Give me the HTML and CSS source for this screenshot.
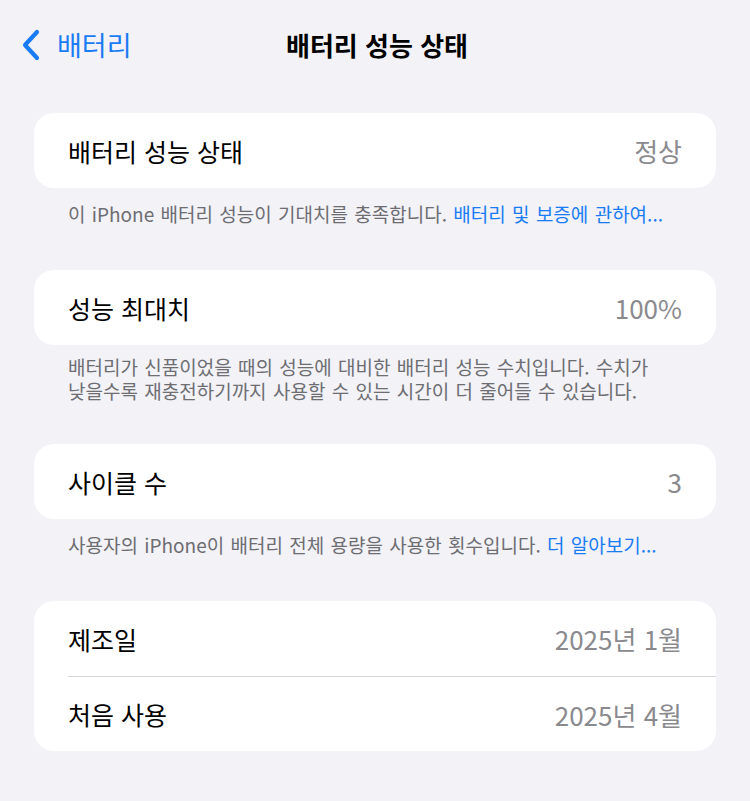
FILE: index.html
```html
<!DOCTYPE html>
<html lang="ko">
<head>
<meta charset="utf-8">
<link rel="stylesheet" href="styles.css">
</head>
<body>
<div class="nav">
  <div class="back">
    <svg class="chev" width="20" height="32" viewBox="0 0 20 32"><path d="M16 3 L4 16 L16 29" fill="none" stroke="#1a7cf5" stroke-width="4.2" stroke-linecap="round" stroke-linejoin="round"/></svg>
    <span class="back-label">배터리</span>
  </div>
  <div class="title">배터리 성능 상태</div>
</div>
<div class="content">
  <div class="section">
    <div class="card">
      <div class="row"><span class="label">배터리 성능 상태</span><span class="value">정상</span></div>
    </div>
    <div class="foot">이 iPhone 배터리 성능이 기대치를 충족합니다. <span class="link">배터리 및 보증에 관하여...</span></div>
  </div>
  <div class="section">
    <div class="card">
      <div class="row"><span class="label">성능 최대치</span><span class="value">100%</span></div>
    </div>
    <div class="foot foot-two">배터리가 신품이었을 때의 성능에 대비한 배터리 성능 수치입니다. 수치가<br>낮을수록 재충전하기까지 사용할 수 있는 시간이 더 줄어들 수 있습니다.</div>
  </div>
  <div class="section">
    <div class="card">
      <div class="row"><span class="label">사이클 수</span><span class="value">3</span></div>
    </div>
    <div class="foot">사용자의 iPhone이 배터리 전체 용량을 사용한 횟수입니다. <span class="link">더 알아보기...</span></div>
  </div>
  <div class="section">
    <div class="card">
      <div class="row"><span class="label">제조일</span><span class="value">2025년 1월</span></div>
      <div class="sep"></div>
      <div class="row row-last"><span class="label">처음 사용</span><span class="value">2025년 4월</span></div>
    </div>
  </div>
</div>
</body>
</html>
```
FILE: styles.css
```css
* { box-sizing: border-box; }
html, body {
  margin: 0;
  padding: 0;
  background: #f2f2f7;
}
body {
  width: 750px;
  height: 801px;
  overflow: hidden;
  font-family: "Noto Sans CJK KR", "Noto Sans", sans-serif;
  color: #000;
}
.nav {
  position: relative;
  height: 90px;
  display: flex;
  align-items: center;
  justify-content: center;
}
.back {
  position: absolute;
  left: 21px;
  top: 29px;
  display: flex;
  align-items: center;
  gap: 16px;
  color: #1a7cf5;
}
.chev { display: block; }
.back-label {
  font-size: 27px;
  line-height: 32px;
}
.title {
  font-size: 26px;
  font-weight: 700;
  line-height: 32px;
  margin-left: 4px;
}
.content {
  padding: 23px 34px 0 34px;
  display: flex;
  flex-direction: column;
}
.section {
  display: flex;
  flex-direction: column;
}
.card {
  background: #fff;
  border-radius: 20px;
  overflow: hidden;
}
.row {
  height: 75px;
  display: flex;
  align-items: center;
  justify-content: space-between;
  padding: 0 34px;
}
.row-last {
  height: 74px;
}
.label {
  font-size: 25px;
}
.value {
  font-size: 26px;
  color: #8a8a8e;
}
.sep {
  height: 1px;
  background: #d6d6da;
  margin-left: 34px;
}
.foot {
  padding: 14px 34px 0 34px;
  margin-bottom: 44px;
  font-size: 19px;
  line-height: 24px;
  color: #6d6d72;
  word-spacing: 1px;
}
.foot-two {
  padding-top: 10px;
  margin-bottom: 41px;
}
.link {
  color: #1a7cf5;
}
```
